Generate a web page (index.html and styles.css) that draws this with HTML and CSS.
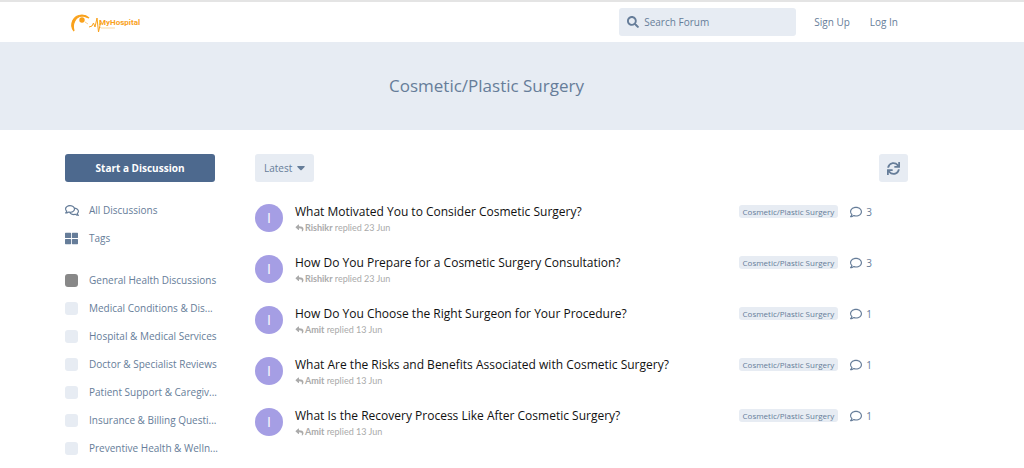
FILE: index.html
```
<!DOCTYPE html>
<html lang="en">
<head>
  <meta charset="utf-8">
  <title>Cosmetic/Plastic Surgery - MyHospital</title>
  <link rel="stylesheet" href="styles.css">
</head>
<body>
  <svg class="sprite" aria-hidden="true">
    <symbol id="i-search" viewBox="0 0 512 512"><path d="M505 442.7L405.3 343c-4.5-4.5-10.6-7-17-7H372c27.6-35.3 44-79.7 44-128C416 93.1 322.9 0 208 0S0 93.1 0 208s93.1 208 208 208c48.3 0 92.7-16.4 128-44v16.3c0 6.4 2.5 12.5 7 17l99.7 99.7c9.4 9.4 24.6 9.4 33.9 0l28.3-28.3c9.4-9.4 9.4-24.6.1-34zM208 336c-70.7 0-128-57.2-128-128 0-70.7 57.2-128 128-128 70.7 0 128 57.2 128 128 0 70.7-57.2 128-128 128z"/></symbol>
    <symbol id="i-comments" viewBox="0 0 576 512"><path d="M532 386.2c27.5-27.1 44-61.1 44-98.2 0-80-76.5-146.1-176.2-157.9C368.3 72.5 294.3 32 208 32 93.1 32 0 103.6 0 192c0 37 16.5 71 44 98.2-15.3 30.7-37.3 54.5-37.7 54.9-6.3 6.7-8.1 16.5-4.4 25 3.6 8.5 12 14 21.2 14 53.5 0 96.7-20.2 125.2-38.8 9.2 2.1 18.7 3.7 28.4 4.9C208.1 407.6 281.8 448 368 448c20.8 0 40.8-2.4 59.8-6.8C456.3 459.7 499.4 480 553 480c9.2 0 17.5-5.5 21.2-14 3.6-8.5 1.9-18.3-4.4-25-.4-.3-22.5-24.1-37.8-54.8zm-392.8-92.3L122.1 305c-14.1 9.1-28.5 16.3-43.1 21.4 2.7-4.7 5.4-9.7 8-14.8l15.5-31.1L77.7 256C64.2 242.6 48 220.7 48 192c0-60.7 73.3-112 160-112s160 51.3 160 112-73.3 112-160 112c-16.5 0-33-1.9-49-5.6l-19.8-4.5zM498.3 352l-24.7 24.4 15.5 31.1c2.6 5.1 5.3 10.1 8 14.8-14.6-5.1-29-12.3-43.1-21.4l-17.1-11.1-19.9 4.6c-16 3.7-32.5 5.6-49 5.6-54 0-102.2-20.1-131.3-49.7C338 339.5 416 272.9 416 192c0-3.4-.4-6.7-.7-10C479.7 196.5 528 238.8 528 288c0 28.7-16.2 50.6-29.7 64z"/></symbol>
    <symbol id="i-tags" viewBox="0 0 512 512"><path d="M24 32h192a24 24 0 0 1 24 24v160a24 24 0 0 1-24 24H24a24 24 0 0 1-24-24V56a24 24 0 0 1 24-24zM296 32h192a24 24 0 0 1 24 24v160a24 24 0 0 1-24 24H296a24 24 0 0 1-24-24V56a24 24 0 0 1 24-24zM24 272h192a24 24 0 0 1 24 24v160a24 24 0 0 1-24 24H24a24 24 0 0 1-24-24V296a24 24 0 0 1 24-24zM296 272h192a24 24 0 0 1 24 24v160a24 24 0 0 1-24 24H296a24 24 0 0 1-24-24V296a24 24 0 0 1 24-24z"/></symbol>
    <symbol id="i-sync" viewBox="0 0 512 512"><path d="M440.65 12.57l4 82.77A247.16 247.16 0 0 0 255.83 8C134.73 8 33.91 94.92 12.29 209.82A12 12 0 0 0 24.09 224h49.05a12 12 0 0 0 11.67-9.26 175.91 175.91 0 0 1 317-56.94l-101.46-4.86a12 12 0 0 0-12.57 12v47.41a12 12 0 0 0 12 12H500a12 12 0 0 0 12-12V12a12 12 0 0 0-12-12h-47.37a12 12 0 0 0-11.98 12.57zM255.83 432a175.61 175.61 0 0 1-146-77.8l101.8 4.87a12 12 0 0 0 12.57-12v-47.4a12 12 0 0 0-12-12H12a12 12 0 0 0-12 12V500a12 12 0 0 0 12 12h47.35a12 12 0 0 0 12-12.6l-4.15-82.57A247.17 247.17 0 0 0 255.83 504c121.11 0 221.93-86.92 243.55-201.82a12 12 0 0 0-11.8-14.18h-49.05a12 12 0 0 0-11.67 9.26A175.86 175.86 0 0 1 255.83 432z"/></symbol>
    <symbol id="i-caret" viewBox="0 0 320 192"><path d="M31 0h258c18 0 27 21 14 34L177 163c-10 10-24 10-34 0L17 34C4 21 13 0 31 0z"/></symbol>
    <symbol id="i-reply" viewBox="0 0 512 512"><path d="M8.309 189.836L184.313 37.851C199.719 24.546 224 35.347 224 56.015v80.053c160.629 1.839 288 34.032 288 186.258 0 61.441-39.581 122.309-83.333 154.132-13.653 9.931-33.111-2.533-28.077-18.631 45.344-145.012-21.507-183.51-176.59-185.742V360c0 20.7-24.3 31.453-39.687 18.164l-176.004-152c-11.071-9.562-11.086-26.753 0-36.328z"/></symbol>
    <symbol id="i-comment" viewBox="0 0 512 512"><path d="M256 32C114.6 32 0 125.1 0 240c0 47.6 19.9 91.2 52.9 126.3C38 405.7 7 439.1 6.5 439.5c-6.6 7-8.4 17.2-4.6 26S14.4 480 24 480c61.5 0 110-25.7 139.1-46.3C192 442.8 223.2 448 256 448c141.4 0 256-93.1 256-208S397.4 32 256 32zm0 368c-26.7 0-53.1-4.1-78.4-12.1l-22.7-7.2-19.5 13.8c-14.3 10.1-33.9 21.4-57.5 29 7.3-12.1 14.4-25.7 19.9-40.2l10.6-28.1-20.6-21.8C69.7 314.1 48 282.2 48 240c0-88.2 93.3-160 208-160s208 71.8 208 160-93.3 160-208 160z"/></symbol>
  </svg>

  <header class="header container">
    <a class="logo" href="#" aria-label="MyHospital">
      <svg width="80" height="24" viewBox="0 0 80 24">
        <path d="M9 21C4 15 8 5 17 5c3 0 5 1 7 3-3-1-5-2-7-2C10 7 7 14 9 21z" fill="#f9a11b" stroke="#f9a11b" stroke-width="1.2"/>
        <circle cx="17" cy="10" r="2.7" fill="#f9a11b"/>
        <path d="M20 12l3 2" stroke="#f9a11b" stroke-opacity=".5"/>
        <path d="M24 17l3-1 1.500-3 1.500 4 2-9 1.500 14 2-9" fill="none" stroke="#f9a11b"/>
        <path d="M35 17l1 1h14" fill="none" stroke="#f9a11b" stroke-opacity=".4"/>
        <text class="logo-text" x="34" y="15">MyHospital</text>
      </svg>
    </a>
    <nav class="header-controls">
      <label class="search">
        <svg class="icon"><use href="#i-search"/></svg>
        <input type="search" placeholder="Search Forum" aria-label="Search Forum">
      </label>
      <a class="header-link" href="#">Sign Up</a>
      <a class="header-link" href="#">Log In</a>
    </nav>
  </header>

  <div class="hero">
    <div class="container">
      <h1>Cosmetic/Plastic Surgery</h1>
    </div>
  </div>

  <div class="page container">
    <aside class="sidebar">
      <button class="button button-primary" type="button">Start a Discussion</button>
      <ul class="side-nav">
        <li><a href="#"><svg class="icon icon-wide"><use href="#i-comments"/></svg><span>All Discussions</span></a></li>
        <li><a href="#"><svg class="icon"><use href="#i-tags"/></svg><span>Tags</span></a></li>
      </ul>
      <ul class="side-nav">
        <li><a href="#"><i class="swatch swatch-general"></i><span>General Health Discussions</span></a></li>
        <li><a href="#"><i class="swatch"></i><span>Medical Conditions &amp; Dis...</span></a></li>
        <li><a href="#"><i class="swatch"></i><span>Hospital &amp; Medical Services</span></a></li>
        <li><a href="#"><i class="swatch"></i><span>Doctor &amp; Specialist Reviews</span></a></li>
        <li><a href="#"><i class="swatch"></i><span>Patient Support &amp; Caregiv...</span></a></li>
        <li><a href="#"><i class="swatch"></i><span>Insurance &amp; Billing Questi...</span></a></li>
        <li><a href="#"><i class="swatch"></i><span>Preventive Health &amp; Welln...</span></a></li>
      </ul>
    </aside>

    <main class="content">
      <div class="toolbar">
        <button class="button" type="button">Latest <svg class="caret"><use href="#i-caret"/></svg></button>
        <button class="button button-icon" type="button" aria-label="Refresh"><svg class="icon"><use href="#i-sync"/></svg></button>
      </div>

      <ul class="discussions">
        <li class="discussion">
          <span class="avatar">I</span>
          <a class="discussion-main" href="#">
            <h3>What Motivated You to Consider Cosmetic Surgery?</h3>
            <p><svg class="icon-reply"><use href="#i-reply"/></svg><b>Rishikr</b> replied 23 Jun</p>
          </a>
          <a class="tag" href="#">Cosmetic/Plastic Surgery</a>
          <span class="count"><svg class="icon"><use href="#i-comment"/></svg>3</span>
        </li>
        <li class="discussion">
          <span class="avatar">I</span>
          <a class="discussion-main" href="#">
            <h3>How Do You Prepare for a Cosmetic Surgery Consultation?</h3>
            <p><svg class="icon-reply"><use href="#i-reply"/></svg><b>Rishikr</b> replied 23 Jun</p>
          </a>
          <a class="tag" href="#">Cosmetic/Plastic Surgery</a>
          <span class="count"><svg class="icon"><use href="#i-comment"/></svg>3</span>
        </li>
        <li class="discussion">
          <span class="avatar">I</span>
          <a class="discussion-main" href="#">
            <h3>How Do You Choose the Right Surgeon for Your Procedure?</h3>
            <p><svg class="icon-reply"><use href="#i-reply"/></svg><b>Amit</b> replied 13 Jun</p>
          </a>
          <a class="tag" href="#">Cosmetic/Plastic Surgery</a>
          <span class="count"><svg class="icon"><use href="#i-comment"/></svg>1</span>
        </li>
        <li class="discussion">
          <span class="avatar">I</span>
          <a class="discussion-main" href="#">
            <h3>What Are the Risks and Benefits Associated with Cosmetic Surgery?</h3>
            <p><svg class="icon-reply"><use href="#i-reply"/></svg><b>Amit</b> replied 13 Jun</p>
          </a>
          <a class="tag" href="#">Cosmetic/Plastic Surgery</a>
          <span class="count"><svg class="icon"><use href="#i-comment"/></svg>1</span>
        </li>
        <li class="discussion">
          <span class="avatar">I</span>
          <a class="discussion-main" href="#">
            <h3>What Is the Recovery Process Like After Cosmetic Surgery?</h3>
            <p><svg class="icon-reply"><use href="#i-reply"/></svg><b>Amit</b> replied 13 Jun</p>
          </a>
          <a class="tag" href="#">Cosmetic/Plastic Surgery</a>
          <span class="count"><svg class="icon"><use href="#i-comment"/></svg>1</span>
        </li>
      </ul>
    </main>
  </div>
</body>
</html>
```

FILE: styles.css
```
* {
  box-sizing: border-box;
}

body {
  margin: 0;
  font-family: 'Open Sans', 'Noto Sans', sans-serif;
  font-size: 10px;
  line-height: 16px;
  color: #667d99;
  background: #fff;
  border-top: 2px solid #e4e4e4;
}

a {
  color: inherit;
  text-decoration: none;
}

ul {
  list-style: none;
  margin: 0;
  padding: 0;
}

.sprite {
  display: none;
}

.container {
  padding-left: 65px;
  padding-right: 116px;
}

.icon {
  width: 12px;
  height: 12px;
  flex: none;
  fill: currentColor;
}

.side-nav .icon,
.button .icon {
  width: 13px;
  height: 13px;
}

.side-nav .icon-wide {
  width: 14px;
}

/* header */
.header {
  display: flex;
  align-items: center;
  justify-content: space-between;
  height: 40px;
}

.logo {
  display: flex;
}

.logo-text {
  font: bold 8px Roboto, sans-serif;
  fill: #f9a11b;
}

.header-controls {
  display: flex;
  align-items: center;
}

.search {
  display: flex;
  align-items: center;
  gap: 5px;
  width: 177px;
  height: 28px;
  margin-right: 8px;
  padding: 0 8px;
  border-radius: 3px;
  background: #e7ecf3;
}

.search input {
  flex: 1;
  min-width: 0;
  padding: 0;
  border: 0;
  outline: 0;
  font: inherit;
  color: inherit;
  background: none;
}

.search input::placeholder {
  color: inherit;
  opacity: 1;
}

.header-link {
  padding: 0 10px;
}

/* hero */
.hero {
  padding: 32px 0;
  text-align: center;
  background: #e7ecf3;
}

.hero h1 {
  margin: 0;
  font-size: 17px;
  font-weight: 400;
  line-height: 24px;
}

/* layout */
.page {
  display: flex;
  gap: 40px;
  padding-top: 24px;
}

.sidebar {
  flex: none;
  width: 150px;
}

.content {
  flex: 1;
  min-width: 0;
}

.button {
  display: flex;
  align-items: center;
  justify-content: center;
  gap: 5px;
  height: 28px;
  padding: 0 9px;
  border: 0;
  border-radius: 3px;
  font: inherit;
  color: inherit;
  background: #e7ecf3;
}

.button-primary {
  width: 100%;
  font-weight: 700;
  color: #fff;
  background: #4d698e;
}

.button-icon {
  padding: 0 8px;
}

.caret {
  width: 8px;
  height: 5px;
  fill: currentColor;
}

/* sidebar */
.side-nav {
  margin-top: 14px;
}

.side-nav a {
  display: grid;
  grid-template-columns: 14px 1fr;
  align-items: center;
  gap: 10px;
  height: 28px;
}

.side-nav span {
  white-space: nowrap;
}

.swatch {
  width: 13px;
  height: 13px;
  border-radius: 3px;
  background: #e7ecf3;
}

.swatch-general {
  background: #888;
}

/* discussion list */
.toolbar {
  display: flex;
  justify-content: space-between;
  margin-bottom: 12px;
}

.discussion {
  display: flex;
  align-items: flex-start;
  height: 51px;
  padding: 10px 36px 0 0;
}

.avatar {
  flex: none;
  width: 28px;
  height: 28px;
  margin-right: 12px;
  border-radius: 50%;
  font-size: 14px;
  line-height: 28px;
  text-align: center;
  color: #fff;
  background: #a59ee4;
}

.discussion-main {
  flex: 1;
  min-width: 0;
  color: #aaa;
}

.discussion h3 {
  margin: 0;
  font-size: 12px;
  font-weight: 400;
  line-height: 16px;
  color: #111;
}

.discussion p {
  margin: 0;
  font-family: Lato, sans-serif;
  font-size: 9px;
  line-height: 16px;
}

.icon-reply {
  width: 9px;
  height: 8px;
  margin-right: 1px;
  vertical-align: -1px;
  fill: currentColor;
}

.tag {
  padding: 0 4px;
  margin-top: 1px;
  border-radius: 3px;
  font-size: 8px;
  line-height: 13px;
  background: #e7ecf3;
}

.count {
  display: flex;
  align-items: center;
  gap: 4px;
  margin-left: 12px;
}
```
